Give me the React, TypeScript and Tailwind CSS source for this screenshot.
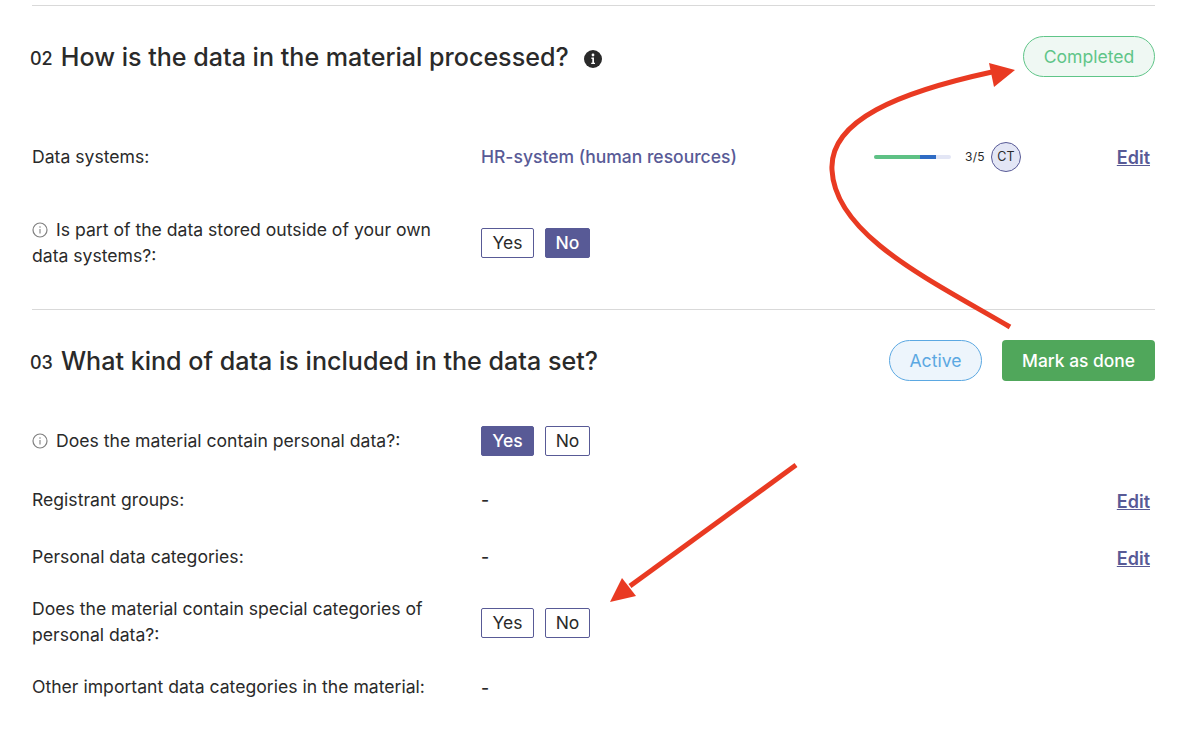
const YES_NO_ACTIVE = "bg-[#585a96] border-[#585a96] text-white font-medium";
const YES_NO_IDLE = "bg-white border-[#585a96] text-[#2a2a2a]";

function InfoOutline() {
  return (
    <svg viewBox="0 0 16 16" className="inline-block w-[16px] h-[16px] mr-[8px] align-[-2px]" fill="none">
      <circle cx="8" cy="8" r="7" stroke="#808080" strokeWidth="1.2" />
      <path d="M8 7v4.4" stroke="#808080" strokeWidth="1.1" />
      <circle cx="8" cy="4.9" r="0.75" fill="#808080" />
    </svg>
  );
}

function InfoSolid() {
  return (
    <svg viewBox="0 0 18 18" className="w-[18px] h-[18px] ml-[15px] mt-[3px]">
      <circle cx="9" cy="9" r="9" fill="#2a2a2a" />
      <circle cx="9" cy="5" r="1.4" fill="#fff" />
      <path d="M7.4 7.6h2.6v5.2h1v1.3H7.2v-1.3h1.1V8.9H7.4z" fill="#fff" />
    </svg>
  );
}

function YesNo({ value }: { value?: "yes" | "no" }) {
  return (
    <div className="flex gap-[11px]">
      <button className={`w-[53px] h-[30px] pt-[1px] border rounded-[2px] text-[17.5px] ${value === "yes" ? YES_NO_ACTIVE : YES_NO_IDLE}`}>
        Yes
      </button>
      <button className={`w-[45px] h-[30px] pt-[1px] border rounded-[2px] text-[17.5px] ${value === "no" ? YES_NO_ACTIVE : YES_NO_IDLE}`}>
        No
      </button>
    </div>
  );
}

function EditLink({ low }: { low?: boolean }) {
  return <a className={`mr-[5px] font-semibold text-[#585a96] underline text-[18px] ${low ? "pt-[3px]" : ""}`}>Edit</a>;
}

function Heading({ num, title, info }: { num: string; title: string; info?: boolean }) {
  return (
    <div className="flex items-center -ml-[2px] pt-[2px]">
      <span className="text-[18px] font-medium mr-[8px] mt-[2px]">{num}</span>
      <h2 className="text-[25.1px] font-medium">{title}</h2>
      {info && <InfoSolid />}
    </div>
  );
}

function Row({ height, label, children, right }: { height: string; label: React.ReactNode; children?: React.ReactNode; right?: React.ReactNode }) {
  return (
    <div className={`grid grid-cols-[449px_1fr_auto] items-center ${height}`}>
      <div className="text-[17.6px] leading-[26px] pr-[12px]">{label}</div>
      <div className="text-[17.6px]">{children}</div>
      {right}
    </div>
  );
}

function Dash() {
  return <span className="block pt-[2px] font-medium">-</span>;
}

function Arrows() {
  return (
    <svg className="absolute left-0 top-0 pointer-events-none" width="1187" height="735" fill="none">
      <path d="M1010 327 C 930 280 835 235 832 170 C 829 120 900 92 992 72" stroke="#e93a22" strokeWidth="5" />
      <path d="M989 63 L1015 70 L994 87 Z" fill="#e93a22" />
      <path d="M796 465 L630 586" stroke="#e93a22" strokeWidth="5" />
      <path d="M610 602 L622 578 L636 596 Z" fill="#e93a22" />
    </svg>
  );
}

export default function App() {
  return (
    <div className="relative w-[1187px] h-[735px] overflow-hidden bg-white text-[#2a2a2a] font-['Inter',sans-serif]">
      <div className="ml-[32px] w-[1123px] pt-[5px]">
        <section className="border-t border-[#d9d9d9] h-[304px]">
          <div className="flex items-center justify-between pt-[30px] h-[71px]">
            <Heading num="02" title="How is the data in the material processed?" info />
            <span className="flex items-center justify-center w-[132px] h-[41px] pt-[2px] rounded-full border border-[#5fc588] bg-[#eff8f3] text-[#5fc588] text-[17.6px]">
              Completed
            </span>
          </div>
          <div className="mt-[50px]">
            <Row
              height="h-[60px]"
              label="Data systems:"
              right={<EditLink />}
            >
              <div className="flex items-center">
                <a className="w-[393px] font-medium text-[#585a96] text-[17.5px]">HR-system (human resources)</a>
                <div className="flex w-[77px] h-[4px] rounded-full overflow-hidden bg-[#e3e6f5]">
                  <div className="w-[46px] bg-[#5ec185]" />
                  <div className="w-[16px] bg-[#2f6cc4]" />
                </div>
                <span className="ml-[14px] text-[12px] tracking-[0.3px]">3/5</span>
                <span className="ml-[6px] w-[30px] h-[30px] rounded-full border border-[#585a96] bg-[#e3e6f5] flex items-center justify-center text-[12.5px]">
                  CT
                </span>
              </div>
            </Row>
            <Row
              height="h-[73px] mt-[19px]"
              label={
                <>
                  <InfoOutline />
                  Is part of the data stored outside of your own data systems?:
                </>
              }
            >
              <YesNo value="no" />
            </Row>
          </div>
        </section>
        <section className="border-t border-[#d9d9d9]">
          <div className="flex items-center justify-between pt-[30px] h-[71px]">
            <Heading num="03" title="What kind of data is included in the data set?" />
            <div className="flex items-center gap-[20px]">
              <span className="flex items-center justify-center w-[93px] h-[41px] pt-[2px] rounded-full border border-[#5ba8e2] bg-[#edf5fc] text-[#5ba8e2] text-[17.6px]">
                Active
              </span>
              <button className="w-[153px] h-[41px] pt-[2px] rounded-[4px] bg-[#50a75b] text-white font-medium text-[17.4px]">
                Mark as done
              </button>
            </div>
          </div>
          <div className="mt-[30px]">
            <Row
              height="h-[60px]"
              label={
                <>
                  <InfoOutline />
                  Does the material contain personal data?:
                </>
              }
            >
              <YesNo value="yes" />
            </Row>
            <Row height="h-[57px]" label="Registrant groups:" right={<EditLink low />}><Dash /></Row>
            <Row height="h-[57px]" label="Personal data categories:" right={<EditLink low />}><Dash /></Row>
            <Row height="h-[73px]" label="Does the material contain special categories of personal data?:">
              <div className="pt-[2px]">
                <YesNo />
              </div>
            </Row>
            <Row height="h-[58px]" label="Other important data categories in the material:"><Dash /></Row>
          </div>
        </section>
      </div>
      <Arrows />
    </div>
  );
}
